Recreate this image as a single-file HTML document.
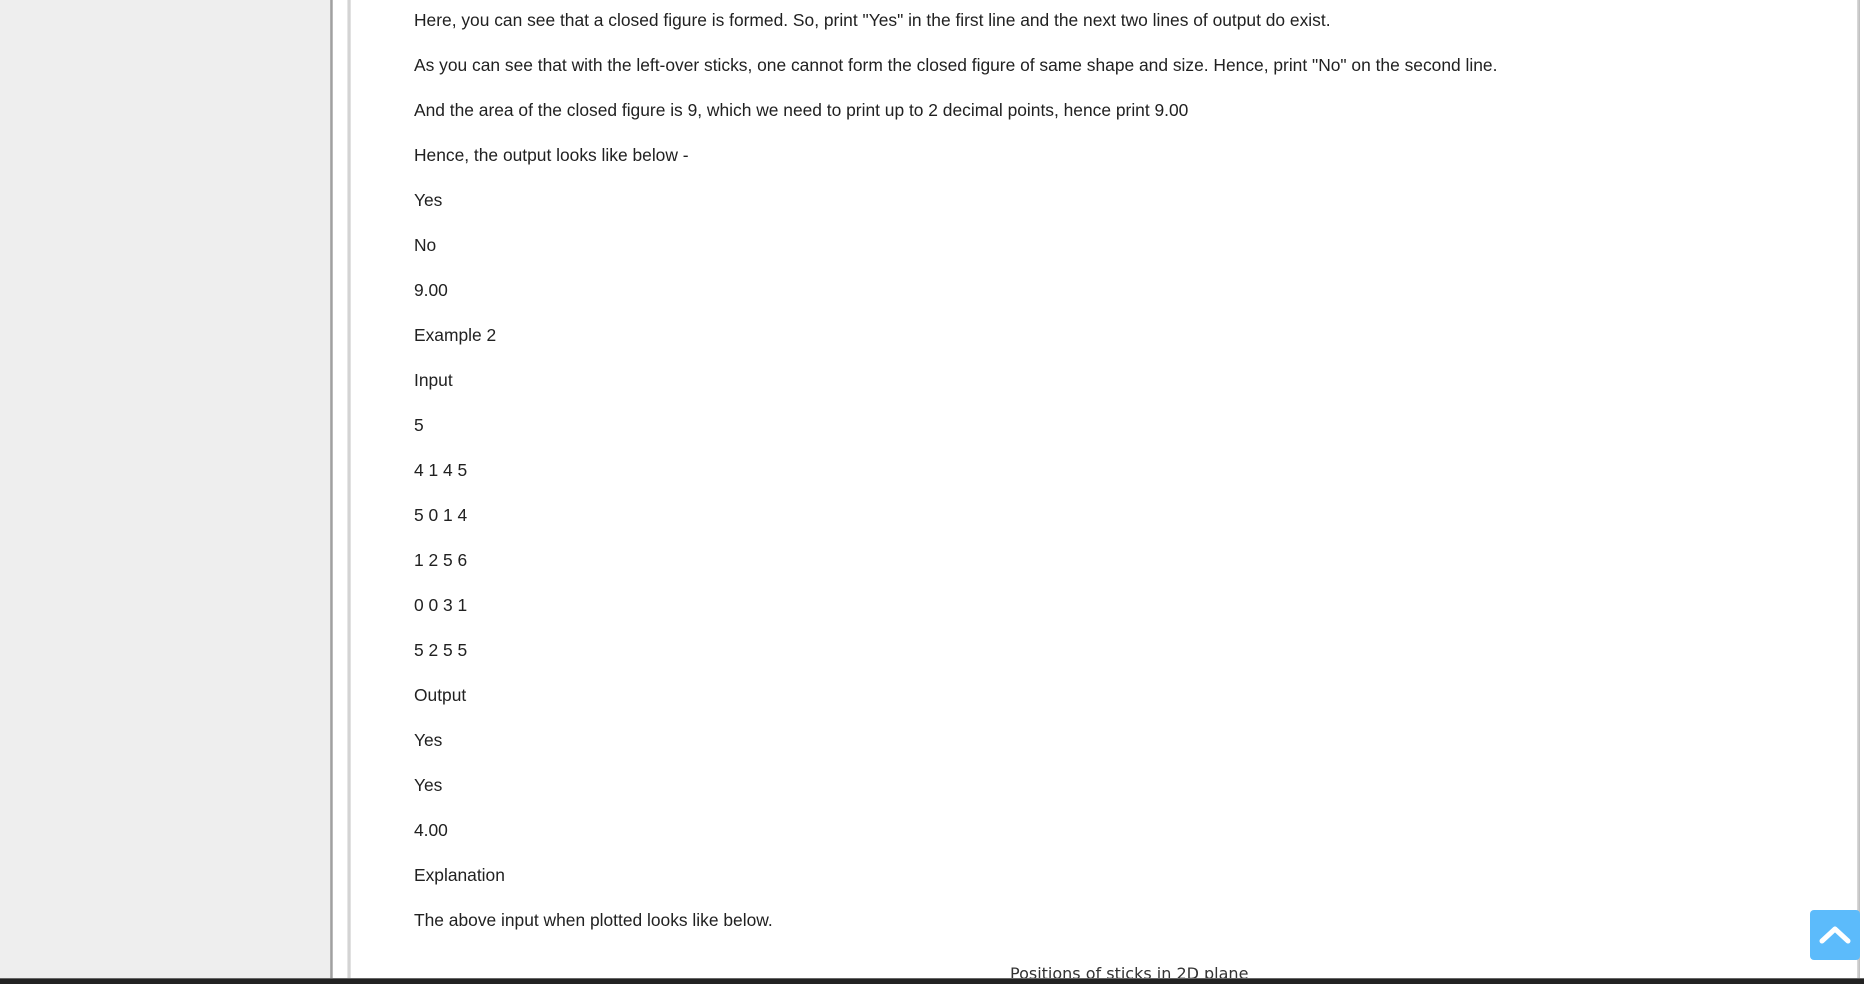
<!DOCTYPE html>
<html><head><meta charset="utf-8"><style>
html,body{margin:0;padding:0;}
body{width:1864px;height:983px;overflow:hidden;position:relative;background:#fff;font-family:"Liberation Sans",Arial,sans-serif;}
.left{position:absolute;left:0;top:0;width:330px;height:983px;background:#eeeeee;}
.l1{position:absolute;left:330px;top:0;width:3px;height:983px;background:linear-gradient(to right,#bbb,#999,#ccc);}
.l2{position:absolute;left:347px;top:0;width:4px;height:983px;background:linear-gradient(to right,#eee,#ccc,#e8e8e8);}
.r1{position:absolute;left:1857px;top:0;width:3px;height:983px;background:linear-gradient(to right,#ddd,#bbb);}
.content{position:absolute;left:414px;top:-2px;font-size:17.4px;color:#212121;}
.content p{margin:0;height:45px;line-height:45px;white-space:nowrap;}
.cap{position:absolute;left:1010px;top:964px;font-family:"DejaVu Sans",sans-serif;font-size:16px;color:#333;}
.bar{position:absolute;left:0;top:978px;width:1864px;height:5px;background:#222;border-top:1px solid #666;}
.btn{position:absolute;left:1810px;top:910px;width:50px;height:50px;background:#5cbbfb;border-radius:4px;}
</style></head><body>
<div class="left"></div><div class="l1"></div><div class="l2"></div><div class="r1"></div>
<div class="content">
<p>Here, you can see that a closed figure is formed. So, print "Yes" in the first line and the next two lines of output do exist.</p>
<p>As you can see that with the left-over sticks, one cannot form the closed figure of same shape and size. Hence, print "No" on the second line.</p>
<p>And the area of the closed figure is 9, which we need to print up to 2 decimal points, hence print 9.00</p>
<p>Hence, the output looks like below -</p>
<p>Yes</p>
<p>No</p>
<p>9.00</p>
<p>Example 2</p>
<p>Input</p>
<p>5</p>
<p>4 1 4 5</p>
<p>5 0 1 4</p>
<p>1 2 5 6</p>
<p>0 0 3 1</p>
<p>5 2 5 5</p>
<p>Output</p>
<p>Yes</p>
<p>Yes</p>
<p>4.00</p>
<p>Explanation</p>
<p>The above input when plotted looks like below.</p>
</div>
<div class="cap">Positions of sticks in 2D plane</div>
<div class="bar"></div>
<div class="btn"><svg width="50" height="50" viewBox="0 0 50 50"><path d="M12 31 L25 19 L38 31" fill="none" stroke="#fff" stroke-width="5" stroke-linecap="round" stroke-linejoin="round"/></svg></div>
</body></html>
